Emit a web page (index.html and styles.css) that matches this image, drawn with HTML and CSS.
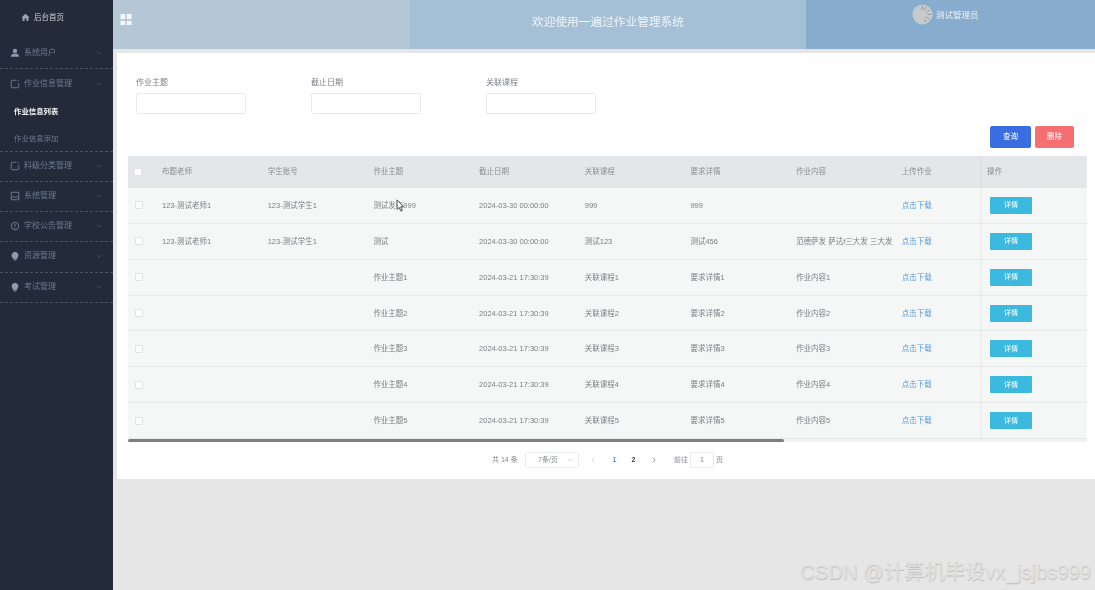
FILE: index.html
```html
<!DOCTYPE html>
<html lang="zh">
<head>
<meta charset="utf-8">
<title>作业管理系统</title>
<link rel="stylesheet" href="styles.css">
</head>
<body>
<div class="app">
  <aside class="sidebar">
    <div class="home"><svg class="ico-home" viewBox="0 0 10 10"><path d="M5 .8 9.600 5H8.300v4H6V6.200H4V9H1.700V5H.4z"/></svg>后台首页</div>
    <nav class="menu">
      <div class="item first"><svg class="ico" viewBox="0 0 12 12"><circle cx="6" cy="3.500" r="2.600" class="fill"/><path class="fill" d="M1 10.500c0-3 2-4 5-4s5 1 5 4z"/></svg><span>系统用户</span><svg class="chev" viewBox="0 0 8 5"><path d="M1 1l3 3 3-3"/></svg></div>
      <div class="item open"><svg class="ico" viewBox="0 0 12 12"><path class="line" d="M7 1.500H2.500a1.500 1.500 0 0 0-1 1V9.500a1.500 1.500 0 0 0 1 1h7a1.500 1.500 0 0 0 1-1V5M8.500 1l2 2"/></svg><span>作业信息管理</span><svg class="chev" viewBox="0 0 8 5"><path d="M1 4l3-3 3 3"/></svg></div>
      <div class="sub active">作业信息列表</div>
      <div class="sub last">作业信息添加</div>
      <div class="item"><svg class="ico" viewBox="0 0 12 12"><path class="line" d="M7 1.500H2.500a1.500 1.500 0 0 0-1 1V9.500a1.500 1.500 0 0 0 1 1h7a1.500 1.500 0 0 0 1-1V5M8.500 1l2 2"/></svg><span>料级分类管理</span><svg class="chev" viewBox="0 0 8 5"><path d="M1 1l3 3 3-3"/></svg></div>
      <div class="item"><svg class="ico" viewBox="0 0 12 12"><path class="line" d="M1.500 1.500h9v9h-9zM1.500 9l3-3 2 2 1.500-1.500 2.500 2.500"/></svg><span>系统管理</span><svg class="chev" viewBox="0 0 8 5"><path d="M1 1l3 3 3-3"/></svg></div>
      <div class="item"><svg class="ico" viewBox="0 0 12 12"><circle class="line" cx="6" cy="6" r="4.500"/><path class="line" d="M6 3.200v3.600M6 8v1"/></svg><span>学校公告管理</span><svg class="chev" viewBox="0 0 8 5"><path d="M1 1l3 3 3-3"/></svg></div>
      <div class="item tall"><svg class="ico" viewBox="0 0 12 12"><path class="fill" d="M6 1a4.200 4.200 0 0 1 2.500 7.500V10h-5V8.500A4.200 4.200 0 0 1 6 1zM4.500 10.500h3V11.500h-3z"/></svg><span>资源管理</span><svg class="chev" viewBox="0 0 8 5"><path d="M1 1l3 3 3-3"/></svg></div>
      <div class="item"><svg class="ico" viewBox="0 0 12 12"><path class="fill" d="M6 1a4.200 4.200 0 0 1 2.500 7.500V10h-5V8.500A4.200 4.200 0 0 1 6 1zM4.500 10.500h3V11.500h-3z"/></svg><span>考试管理</span><svg class="chev" viewBox="0 0 8 5"><path d="M1 1l3 3 3-3"/></svg></div>
    </nav>
  </aside>
  <main class="main">
    <header class="topbar">
      <div class="top-left"><svg class="grid-ico" viewBox="0 0 12 12"><path d="M0 0h5.200v5.700H0zM6.800 0H12v5.700H6.800zM0 7.500h5.200V12H0zM6.800 7.500H12V12H6.800z"/></svg></div>
      <div class="top-mid">欢迎使用一遍过作业管理系统</div>
      <div class="top-right">
        <svg class="avatar" viewBox="0 0 22 22"><circle cx="11" cy="11" r="10.500" fill="#c6cacd"/><g stroke="#8f9499" stroke-width="1"><path d="M11 2v4"/><path d="M15 3l-2 3.500"/><path d="M18.500 6.500l-3 2"/><path d="M20 11h-3.500"/><path d="M18 15.500l-3-1.500"/><path d="M14.500 19l-1.500-3"/><path d="M8 3.500l1 2.500" stroke="#b2b6ba"/></g></svg>
        <span>测试管理员</span>
      </div>
    </header>
    <section class="card">
      <form class="search">
        <label class="field"><span>作业主题</span><span class="input"></span></label>
        <label class="field"><span>截止日期</span><span class="input"></span></label>
        <label class="field"><span>关联课程</span><span class="input"></span></label>
      </form>
      <div class="actions"><span class="btn primary">查询</span><span class="btn danger">删除</span></div>
      <div class="table">
        <div class="scroll">
          <div class="row head"><span class="cell"><i class="check head-check"></i></span><span>布题老师</span><span>学生账号</span><span>作业主题</span><span>截止日期</span><span>关联课程</span><span>要求详情</span><span>作业内容</span><span>上传作业</span></div>
          <div class="row"><span class="cell"><i class="check"></i></span><span>123-测试老师1</span><span>123-测试学生1</span><span>测试发布999</span><span>2024-03-30 00:00:00</span><span>999</span><span>999</span><span></span><span class="link">点击下载</span></div>
          <div class="row"><span class="cell"><i class="check"></i></span><span>123-测试老师1</span><span>123-测试学生1</span><span>测试</span><span>2024-03-30 00:00:00</span><span>测试123</span><span>测试456</span><span>范德萨发 萨达f三大发 三大发</span><span class="link">点击下载</span></div>
          <div class="row"><span class="cell"><i class="check"></i></span><span></span><span></span><span>作业主题1</span><span>2024-03-21 17:30:39</span><span>关联课程1</span><span>要求详情1</span><span>作业内容1</span><span class="link">点击下载</span></div>
          <div class="row"><span class="cell"><i class="check"></i></span><span></span><span></span><span>作业主题2</span><span>2024-03-21 17:30:39</span><span>关联课程2</span><span>要求详情2</span><span>作业内容2</span><span class="link">点击下载</span></div>
          <div class="row"><span class="cell"><i class="check"></i></span><span></span><span></span><span>作业主题3</span><span>2024-03-21 17:30:39</span><span>关联课程3</span><span>要求详情3</span><span>作业内容3</span><span class="link">点击下载</span></div>
          <div class="row"><span class="cell"><i class="check"></i></span><span></span><span></span><span>作业主题4</span><span>2024-03-21 17:30:39</span><span>关联课程4</span><span>要求详情4</span><span>作业内容4</span><span class="link">点击下载</span></div>
          <div class="row"><span class="cell"><i class="check"></i></span><span></span><span></span><span>作业主题5</span><span>2024-03-21 17:30:39</span><span>关联课程5</span><span>要求详情5</span><span>作业内容5</span><span class="link">点击下载</span></div>
        </div>
        <div class="fixed">
          <div class="fixed-row head">操作</div>
          <div class="fixed-row"><span class="detail">详情</span></div>
          <div class="fixed-row"><span class="detail">详情</span></div>
          <div class="fixed-row"><span class="detail">详情</span></div>
          <div class="fixed-row"><span class="detail">详情</span></div>
          <div class="fixed-row"><span class="detail">详情</span></div>
          <div class="fixed-row"><span class="detail">详情</span></div>
          <div class="fixed-row"><span class="detail">详情</span></div>
        </div>
      </div>
      <div class="scrollbar"><div class="thumb"></div></div>
      <div class="pager">
        <span class="total">共 14 条</span>
        <span class="size">7条/页<svg class="size-chev" viewBox="0 0 8 5"><path d="M1 1l3 3 3-3"/></svg></span>
        <svg class="arrow muted" viewBox="0 0 5 8"><path d="M4 1 1 4l3 3"/></svg>
        <span class="num current">1</span>
        <span class="num">2</span>
        <svg class="arrow next" viewBox="0 0 5 8"><path d="M1 1l3 3-3 3"/></svg>
        <span class="goto">前往</span>
        <span class="page-input">1</span>
        <span class="goto">页</span>
      </div>
    </section>
  </main>
  <svg class="cursor" viewBox="0 0 10 15"><path d="M1 1v11l2.500-2.300 2 4.300 1.700-.8-2-4.200h3.300z" fill="#fff" stroke="#222" stroke-width=".9"/></svg>
  <div class="watermark">CSDN @计算机毕设vx_jsjbs999</div>
</div>
</body>
</html>
```
FILE: styles.css
```css
* { box-sizing: border-box; }
html, body { margin: 0; height: 100%; overflow: hidden; }
body { font-family: "Liberation Sans", "Noto Sans CJK SC", sans-serif; background: #e6e6e6; }
.app { position: relative; display: flex; width: 1095px; height: 590px; overflow: hidden; }

.sidebar { flex: 0 0 113px; background: #232a3a; color: #6d7a90; font-size: 8px; filter: blur(.35px); }
.home { height: 38px; padding: 13px 0 0 21px; display: flex; align-items: flex-start; gap: 4px; color: #c9ced8; font-size: 7.500px; line-height: 9px; }
.ico-home { width: 9px; height: 9px; fill: #9aa5b8; }
.item { height: 30px; display: flex; align-items: center; padding: 0 0 2px 10px; border-bottom: 1px dashed #4b5261; line-height: 10px; }
.item.open { height: 29px; padding-bottom: 0; border-bottom: 0; }
.item.first { height: 31px; padding-bottom: 1px; }
.item.tall { height: 31px; }
.item span { margin-left: 4px; flex: 1; }
.ico { width: 10px; height: 10px; flex: none; }
.ico .fill { fill: #8d9ab0; }
.ico .line { fill: none; stroke: #7a879d; stroke-width: 1; }
.chev { width: 6px; height: 4px; margin-right: 11px; fill: none; stroke: #4f5a6d; stroke-width: 1; }
.sub { height: 26px; padding: 0 0 1px 14px; display: flex; align-items: center; font-size: 7.400px; line-height: 10px; }
.sub.active { color: #f2f4f7; font-weight: 700; height: 30px; padding-bottom: 2px; }
.sub.last { height: 24px; border-bottom: 1px dashed #4b5261; }

.main { flex: 1; min-width: 0; display: flex; flex-direction: column; }
.topbar { height: 49px; display: flex; flex: none; }
.top-left { flex: 0 0 297px; background: #b5c6d5; padding: 14px 0 0 7px; }
.grid-ico { display: block; width: 12px; height: 11px; fill: #f5f8fa; }
.top-mid { flex: 0 0 396px; background: #a5c0d6; color: #eef4f8; font-size: 11.700px; text-align: center; line-height: 44px; filter: blur(.25px); }
.top-right { flex: 1; background: #87acce; display: flex; align-items: flex-start; padding: 4px 0 0 106px; color: #eef3f8; font-size: 8.500px; gap: 3px; }
.avatar { width: 21px; height: 21px; flex: none; }
.top-right span { line-height: 22px; filter: blur(.25px); }

.card { margin: 4px 0 0 4px; height: 426px; background: #fff; padding: 0 8px 0 11px; color: #75797f; font-size: 7.500px; }
.card > * { filter: blur(.3px); }
.search { display: flex; gap: 65px; padding: 25px 0 0 8px; }
.field { width: 110px; display: flex; flex-direction: column; font-size: 8px; color: #7d8187; line-height: 10px; gap: 5px; }
.input { height: 21px; border: 1px solid #e8eaed; border-radius: 2px; background: #fff; }
.actions { display: flex; gap: 4px; padding: 12px 13px 0 0; justify-content: flex-end; }
.btn { height: 22px; border-radius: 2px; color: #fff; font-size: 7.500px; line-height: 10px; padding-bottom: 1px; display: flex; align-items: center; justify-content: center; }
.btn.primary { width: 41px; background: #3a6ee0; }
.btn.danger { width: 39px; background: #f56e70; }

.table { display: flex; width: 959px; margin-top: 8px; height: 283px; }
.scroll { width: 854px; overflow: hidden; flex: none; }
.row { display: grid; grid-template-columns: 34px repeat(8, 105.700px); height: 35.860px; padding-top: 1px; line-height: 10px; align-items: center; background: #f5f6f6; border-bottom: 1px solid #e8eaea; white-space: nowrap; color: #7b7f83; }
.row.head { height: 32px; padding: 0 0 1px; background: #e3e7ea; border-bottom: 0; color: #8a8e92; }
.cell { display: flex; padding-left: 7px; }
.check { width: 8px; height: 8px; margin-top: -1px; background: #fff; border: 1px solid #e1e3e6; border-radius: 1px; }
.head-check { margin-left: -1.500px; margin-top: 1px; }
.link { color: #5b9bd8; }
.fixed { flex: 1; box-shadow: -1px 0 2px rgba(0, 0, 0, .06); position: relative; }
.fixed-row { height: 35.860px; background: #f5f6f6; border-bottom: 1px solid #e8eaea; display: flex; align-items: center; padding-left: 8px; line-height: 10px; }
.fixed-row.head { height: 32px; padding: 0 0 1px 5px; background: #e3e7ea; border-bottom: 0; color: #8a8e92; }
.detail { width: 42px; height: 17px; background: #3cb9de; color: #fff; border-radius: 1px; font-size: 7px; display: flex; align-items: center; justify-content: center; }

.scrollbar { width: 959px; height: 3px; background: #f0f1f2; }
.thumb { width: 656px; height: 3px; background: #7f7f7f; border-radius: 2px; }

.pager { display: flex; align-items: center; height: 16px; margin-top: 10px; padding-left: 364px; color: #85888d; font-size: 7px; line-height: 10px; }
.total { width: 33px; }
.size { width: 54px; height: 16px; border: 1px solid #e9ebee; border-radius: 2px; padding: 0 5px 0 12px; display: flex; align-items: center; justify-content: space-between; }
.size-chev { width: 6px; height: 4px; fill: none; stroke: #c5c8cc; stroke-width: 1; }
.arrow { width: 4px; height: 6px; margin-left: 12px; fill: none; stroke: #777b80; stroke-width: 1; }
.arrow.muted { stroke: #c8cbcf; }
.arrow.next { margin-left: 9px; }
.num { width: 19px; text-align: center; font-weight: 700; color: #3a3d42; }
.num.current { margin-left: 10px; color: #4a90e2; }
.arrow + .goto { margin-left: 18px; }
.page-input { width: 24px; height: 16px; margin: 0 2px; border: 1px solid #e9ebee; border-radius: 2px; display: flex; align-items: center; justify-content: center; }

.cursor { position: absolute; left: 396px; top: 199px; width: 9px; height: 13px; }
.watermark { position: absolute; left: 800px; top: 560px; font-size: 20.300px; line-height: 24px; white-space: nowrap; color: #e0e0e0; text-shadow: .5px .5px .8px #bdbdbd; }
```
